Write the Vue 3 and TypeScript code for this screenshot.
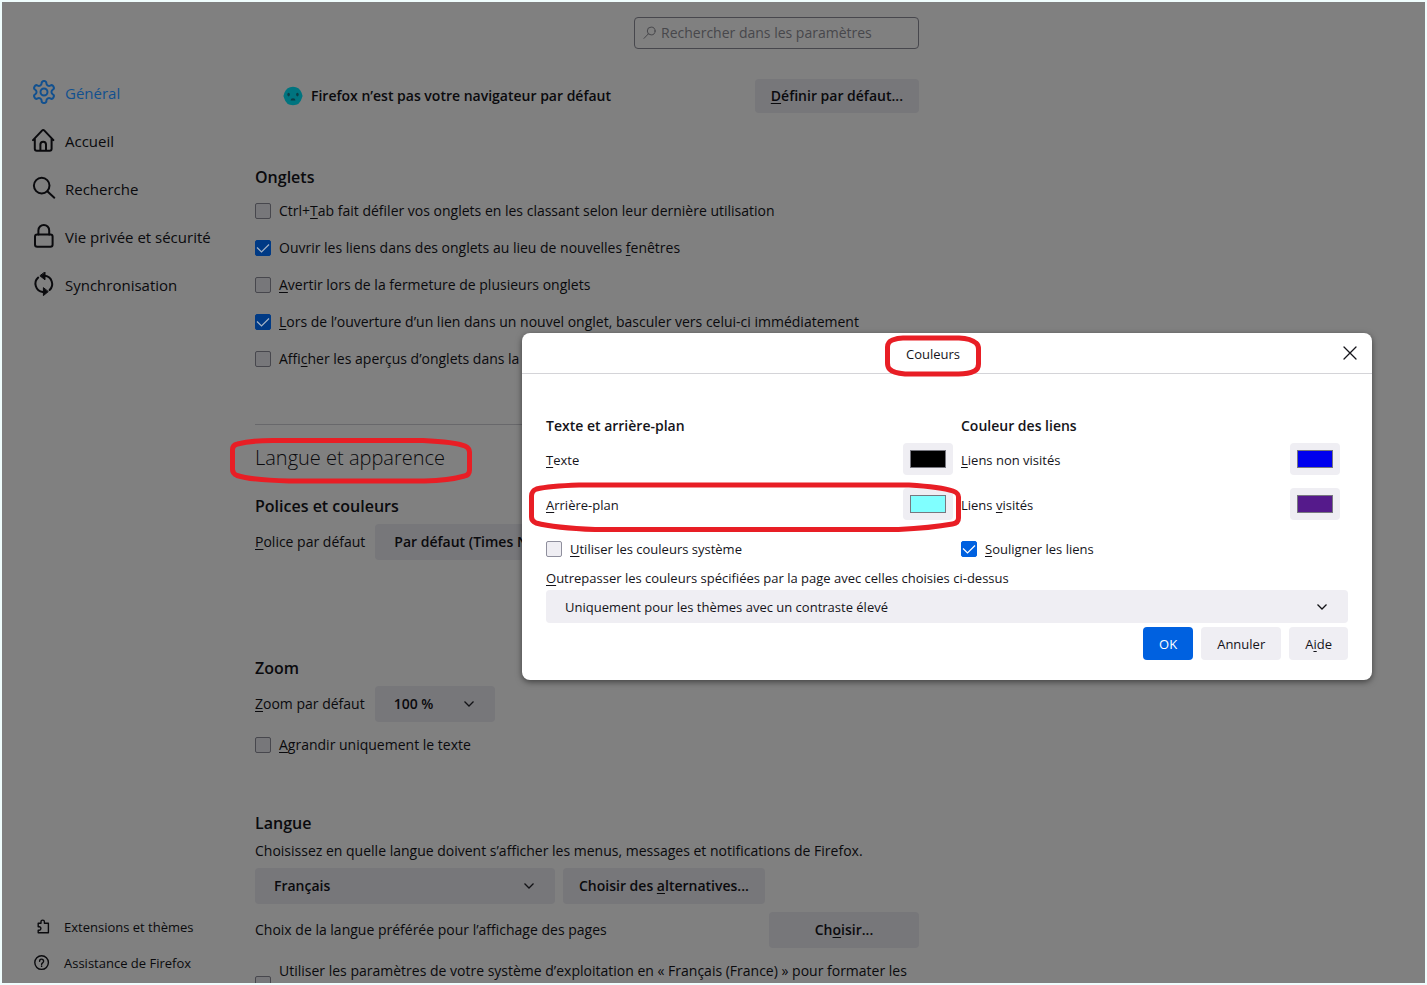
<script setup lang="ts">
import { ref } from 'vue'

interface Label { before?: string; key?: string; after: string }
interface CheckItem extends Label { id: string; checked: boolean }
interface ColorItem extends Label { id: string; value: string; marked?: boolean }

const tabs = ref<CheckItem[]>([
  { id: 'ctrl-tab', before: 'Ctrl+', key: 'T', after: 'ab fait défiler vos onglets en les classant selon leur dernière utilisation', checked: false },
  { id: 'open-tabs', before: 'Ouvrir les liens dans des onglets au lieu de nouvelles ', key: 'f', after: 'enêtres', checked: true },
  { id: 'warn-close', key: 'A', after: 'vertir lors de la fermeture de plusieurs onglets', checked: false },
  { id: 'switch-tab', key: 'L', after: 'ors de l’ouverture d’un lien dans un nouvel onglet, basculer vers celui-ci immédiatement', checked: true },
  { id: 'previews', before: 'Affi', key: 'c', after: 'her les aperçus d’onglets dans la barre des tâches', checked: false },
])

const textColors = ref<ColorItem[]>([
  { id: 'c-text', key: 'T', after: 'exte', value: '#000000' },
  { id: 'c-back', key: 'A', after: 'rrière-plan', value: '#80ffff', marked: true },
])
const linkColors = ref<ColorItem[]>([
  { id: 'c-link', key: 'L', after: 'iens non visités', value: '#0000ee' },
  { id: 'c-visited', before: 'Liens ', key: 'v', after: 'isités', value: '#551a8b' },
])

const systemColors = ref(false)
const underline = ref(true)
const textOnly = ref(false)
const osFormats = ref(false)
const open = ref(true)
</script>

<template>
  <div class="frame">
    <div class="screen">
      <aside class="sidebar">
        <nav class="nav">
          <a class="nav-item active" href="#general">
            <svg viewBox="1 1 22 22"><path d="M12.22 2h-.44a2 2 0 0 0-2 2v.18a2 2 0 0 1-1 1.73l-.43.25a2 2 0 0 1-2 0l-.15-.08a2 2 0 0 0-2.73.73l-.22.38a2 2 0 0 0 .73 2.73l.15.1a2 2 0 0 1 1 1.72v.51a2 2 0 0 1-1 1.74l-.15.09a2 2 0 0 0-.73 2.73l.22.38a2 2 0 0 0 2.73.73l.15-.08a2 2 0 0 1 2 0l.43.25a2 2 0 0 1 1 1.73V20a2 2 0 0 0 2 2h.44a2 2 0 0 0 2-2v-.18a2 2 0 0 1 1-1.73l.43-.25a2 2 0 0 1 2 0l.15.08a2 2 0 0 0 2.73-.73l.22-.39a2 2 0 0 0-.73-2.73l-.15-.08a2 2 0 0 1-1-1.74v-.5a2 2 0 0 1 1-1.74l.15-.09a2 2 0 0 0 .73-2.73l-.22-.38a2 2 0 0 0-2.73-.73l-.15.08a2 2 0 0 1-2 0l-.43-.25a2 2 0 0 1-1-1.73V4a2 2 0 0 0-2-2z" /><circle cx="12" cy="12" r="3.2" /></svg>
            <span>Général</span>
          </a>
          <a class="nav-item" href="#home">
            <svg viewBox="0 0 24 24"><path d="M1 12.1 10 2.6q1.2-1.2 2.4 0l9 9.5M2.8 10.500v10.300a2 2 0 0 0 2 2h12.800a2 2 0 0 0 2-2V10.500M8.400 22.500v-6a2.800 2.800 0 0 1 5.600 0v6" /></svg>
            <span>Accueil</span>
          </a>
          <a class="nav-item" href="#search">
            <svg viewBox="0 0 24 24"><circle cx="9.7" cy="9.6" r="7.8" /><path d="m15.300 15.300 7 6.400" /></svg>
            <span>Recherche</span>
          </a>
          <a class="nav-item" href="#privacy">
            <svg viewBox="0 0 24 24"><rect x="3" y="10.4" width="17.6" height="12.4" rx="2.2" /><path d="M6.400 10.400V6.400a5.400 5.400 0 0 1 10.800 0v4" /></svg>
            <span>Vie privée et sécurité</span>
          </a>
          <a class="nav-item" href="#sync">
            <svg viewBox="0 0 24 24"><path d="M6.2 5.6A8.3 8.3 0 0 0 10.8 20M17.6 18A8.3 8.3 0 0 0 13 3.8" /><path class="solid" d="M13 .2v7.6L8.2 4zM11.4 16v7.6l4.6-3.8z" /></svg>
            <span>Synchronisation</span>
          </a>
        </nav>
        <nav class="nav-foot">
          <a class="foot-item" href="#addons">
            <svg viewBox="0 0 16 16"><path d="M4.200 6.800V4.200h2.800V2.800a1.700 1.700 0 0 1 3.400 0v1.400h4v9.600H4.200v-2.600h1a1.500 1.500 0 0 0 0-3.400h-1z" /></svg>
            <span>Extensions et thèmes</span>
          </a>
          <a class="foot-item" href="#help">
            <svg viewBox="0 0 16 16"><circle cx="7.6" cy="7.6" r="6.8" /><path d="M5.6 6.2a2 2 0 1 1 3.2 1.5c-.8.6-1.2.8-1.2 1.700" /><path d="M7.6 11v.4" /></svg>
            <span>Assistance de Firefox</span>
          </a>
        </nav>
      </aside>

      <main class="main">
        <div class="search">
          <svg viewBox="0 0 14 14"><circle cx="8.2" cy="5" r="3.9" /><path d="M5.4 7.8 1 12.4" /></svg>
          <input type="search" aria-label="Rechercher dans les paramètres" placeholder="Rechercher dans les paramètres">
        </div>

        <div class="default-row">
          <svg class="face" viewBox="0 0 20 20"><path class="skin" d="M10 .8a9.2 9.2 0 0 1 8.6 6L19.6 10l-.9 2.4A9.2 9.2 0 0 1 10 19.2a9.2 9.2 0 0 1-8.7-6.8L.4 10l1-3.2A9.2 9.2 0 0 1 10 .8z" /><ellipse cx="5.6" cy="8.6" rx="1.3" ry="1.8" /><ellipse cx="14.4" cy="8.6" rx="1.3" ry="1.8" /><path d="M7.6 14.6a2.4 2.4 0 0 1 4.8 0z" /></svg>
          <strong>Firefox n’est pas votre navigateur par défaut</strong>
          <button type="button" class="btn"><u>D</u>éfinir par défaut...</button>
        </div>

        <section class="group tabs">
          <h2>Onglets</h2>
          <label v-for="t in tabs" :key="t.id" class="check" :for="t.id">
            <input :id="t.id" v-model="t.checked" type="checkbox">
            <span>{{ t.before }}<u>{{ t.key }}</u>{{ t.after }}</span>
          </label>
        </section>

        <div class="title">
          <h1>Langue et apparence</h1>
          <svg class="mark mark-title" viewBox="0 0 244 46"><path d="M44 2.500H194Q226 4 236 8q4.500 2 4.500 6v18q0 5-5 6-16 4.500-40 5H60Q22 42 8 37.500q-4.500-2-4.500-6V12q0-5 5-6Q22 2.500 44 2.500z" /></svg>
        </div>

        <section class="group fonts">
          <h2>Polices et couleurs</h2>
          <div class="field">
            <label for="font"><u>P</u>olice par défaut</label>
            <select id="font" class="select font-select"><option>Par défaut (Times New Roman)</option></select>
          </div>
        </section>

        <section class="group zoom">
          <h2>Zoom</h2>
          <div class="field">
            <label for="zoom"><u>Z</u>oom par défaut</label>
            <select id="zoom" class="select zoom-select"><option>100 %</option></select>
          </div>
          <label class="check" for="text-only">
            <input id="text-only" v-model="textOnly" type="checkbox">
            <span><u>A</u>grandir uniquement le texte</span>
          </label>
        </section>

        <section class="group language">
          <h2>Langue</h2>
          <label class="desc" for="lang">Choisissez en quelle langue doivent s’afficher les menus, messages et notifications de Firefox.</label>
          <div class="field">
            <select id="lang" class="select lang-select"><option>Français</option></select>
            <button type="button" class="btn tall">Choisir des <u>a</u>lternatives...</button>
          </div>
          <div class="field spread">
            <span>Choix de la langue préférée pour l’affichage des pages</span>
            <button type="button" class="btn tall wide">Ch<u>o</u>isir...</button>
          </div>
          <label class="check multi" for="os-format">
            <input id="os-format" v-model="osFormats" type="checkbox">
            <span>Utiliser les paramètres de votre système d’exploitation en « Français (France) » pour formater les</span>
          </label>
        </section>
      </main>

      <div v-if="open" class="overlay">
        <div class="dialog" role="dialog" aria-labelledby="dlg-title">
          <header class="dlg-head">
            <div class="dlg-title">
              <span id="dlg-title">Couleurs</span>
              <svg class="mark mark-dialog" viewBox="0 0 96 42"><path d="M18 3H74Q86 3.500 91 8q2.500 2 2.500 6v15q0 5-4 7-6 3-16 3H20Q8 38 4.500 34q-2-2-2-6V12q0-5 5-7 5-2 10.500-2z" /></svg>
            </div>
            <button type="button" class="close" aria-label="Fermer" @click="open = false">
              <svg viewBox="0 0 14 14"><path d="m1 1 12 12M13 1 1 13" /></svg>
            </button>
          </header>
          <div class="dlg-body">
            <div class="columns">
              <section class="column">
                <h3>Texte et arrière-plan</h3>
                <div v-for="c in textColors" :key="c.id" class="color-row">
                  <label :for="c.id">{{ c.before }}<u>{{ c.key }}</u>{{ c.after }}</label>
                  <input :id="c.id" v-model="c.value" type="color">
                  <svg v-if="c.marked" class="mark mark-row" viewBox="0 0 432 50"><path d="M50 3H380Q412 5 424 9q5.500 2 5.500 6V36q0 5-6 6-22 4-54 5.500H66Q26 46 7 41q-4.500-2-4.500-6V14q0-5 5-7Q20 4 50 3z" /></svg>
                </div>
                <label class="check small" for="system">
                  <input id="system" v-model="systemColors" type="checkbox">
                  <span><u>U</u>tiliser les couleurs système</span>
                </label>
              </section>
              <section class="column">
                <h3>Couleur des liens</h3>
                <div v-for="c in linkColors" :key="c.id" class="color-row">
                  <label :for="c.id">{{ c.before }}<u>{{ c.key }}</u>{{ c.after }}</label>
                  <input :id="c.id" v-model="c.value" type="color">
                </div>
                <label class="check small" for="underline">
                  <input id="underline" v-model="underline" type="checkbox">
                  <span><u>S</u>ouligner les liens</span>
                </label>
              </section>
            </div>
            <label class="override" for="override"><u>O</u>utrepasser les couleurs spécifiées par la page avec celles choisies ci-dessus</label>
            <select id="override" class="select override-select"><option>Uniquement pour les thèmes avec un contraste élevé</option></select>
            <div class="actions">
              <button type="button" class="btn primary">OK</button>
              <button type="button" class="btn">Annuler</button>
              <button type="button" class="btn">A<u>i</u>de</button>
            </div>
          </div>
        </div>
      </div>
    </div>
  </div>
</template>

<style>
body { margin: 0; }
</style>

<style scoped>
* { box-sizing: border-box; }
.frame {
  height: 100vh;
  padding: 2px;
  background: #effdfd;
  color: #0a0a0d;
  font: 14px/20px "Open Sans", "Noto Sans", sans-serif;
}
.screen {
  position: relative;
  display: flex;
  height: 100%;
  overflow: hidden;
  background: #808080;
}
h1, h2, h3 { margin: 0; }
u { text-decoration: underline; text-underline-offset: 2px; }
button, input, select { margin: 0; font: inherit; color: inherit; }
svg { flex: none; fill: none; stroke: currentColor; stroke-linecap: round; stroke-linejoin: round; }

.sidebar {
  display: flex;
  flex-direction: column;
  justify-content: space-between;
  flex: none;
  width: 253px;
  padding: 66px 0 2px 30px;
}
.nav, .nav-foot { display: flex; flex-direction: column; }
.nav-item, .foot-item { display: flex; align-items: center; color: inherit; text-decoration: none; }
.nav-item { gap: 9px; height: 48px; font-size: 15px; }
.nav-item span { padding-top: 2px; }
.nav-item svg { width: 24px; height: 24px; stroke-width: 2; }
.nav-item .solid { fill: currentColor; stroke-width: 1; }
.nav-item.active { color: #11508f; }
.nav-item.active svg { stroke-width: 1.8; }
.foot-item { gap: 14px; height: 36px; padding-left: 2px; font-size: 13px; }
.foot-item svg { width: 16px; height: 16px; stroke-width: 1.4; }

.main { display: flex; flex-direction: column; width: 664px; }
.main > * { flex: none; }
.search {
  display: flex;
  align-items: center;
  align-self: flex-end;
  gap: 4px;
  width: 285px;
  height: 32px;
  margin-top: 15px;
  padding: 0 8px;
  border: 1px solid #47474d;
  border-radius: 4px;
  color: #47474b;
}
.search svg { width: 14px; height: 14px; }
.search input { flex: 1; min-width: 0; padding: 0; border: 0; outline: 0; background: none; }
.search input::placeholder { color: #47474b; opacity: 1; }

.btn {
  height: 33px;
  padding: 0 16px;
  border: 0;
  border-radius: 4px;
  background: #77777a;
  font-weight: 600;
}
.default-row { display: flex; align-items: center; height: 34px; margin-top: 30px; padding-left: 28px; }
.default-row strong { flex: 1; padding-left: 8px; font-weight: 600; }
.default-row .btn { height: 34px; }
.face { width: 20px; height: 20px; stroke: none; fill: #0b3d46; }
.face .skin { fill: #00747f; }

.group { display: flex; flex-direction: column; }
.group h2 { font-size: 16px; line-height: 24px; font-weight: 600; }
.tabs { margin-top: 52px; padding-bottom: 47px; border-bottom: 1px solid #68686b; }
.check { display: flex; align-items: center; gap: 8px; height: 37px; }
.group.tabs h2 { margin-bottom: 3px; }
.check input {
  flex: none;
  appearance: none;
  width: 16px;
  height: 16px;
  border: 1px solid #47474d;
  border-radius: 2px;
  background: #77777a;
}
.check input:checked {
  border-color: #003a85;
  background: #003a85 url("data:image/svg+xml,%3Csvg xmlns='http://www.w3.org/2000/svg' viewBox='0 0 14 14'%3E%3Cpath d='M1 6.500l4.500 4.500L13 3.500' fill='none' stroke='%23a3b3c6' stroke-width='1.200'/%3E%3C/svg%3E") center / 14px 14px;
}

.title { position: relative; display: flex; align-items: center; height: 40px; margin-top: 13px; }
h1 { font-size: 20px; line-height: 28px; font-weight: 300; }
.mark { position: absolute; stroke: #e81e25; stroke-width: 5; pointer-events: none; }
.mark-title { left: -26px; top: 0; width: 244px; height: 46px; }

.fonts { margin-top: 16px; }
.field { display: flex; align-items: center; gap: 8px; }
.field label { padding-right: 2px; }
.select {
  appearance: none;
  height: 36px;
  padding: 0 40px 0 19px;
  border: 0;
  border-radius: 4px;
  background: #77777a url("data:image/svg+xml,%3Csvg xmlns='http://www.w3.org/2000/svg' viewBox='0 0 12 12'%3E%3Cpath d='M1.500 3.500L6 8 10.500 3.500' fill='none' stroke='%23121216' stroke-width='1.300'/%3E%3C/svg%3E") no-repeat right 20px center / 12px 12px;
  font-weight: 600;
}
.font-select { width: 300px; }
.fonts .field { margin-top: 6px; }
.zoom { margin-top: 96px; }
.zoom .field { margin-top: 6px; }
.zoom .check { margin-top: 4px; }
.zoom-select { width: 120px; }
.language { margin-top: 48px; }
.desc { display: block; margin: 6px 0 7px; }
.lang-select { width: 300px; }
.tall { height: 36px; }
.wide { width: 150px; }
.spread { justify-content: space-between; margin-top: 8px; }
.multi { height: 40px; margin-top: 13px; }
.multi input { margin-top: 6px; }
.multi span { align-self: flex-start; }

.overlay { position: absolute; inset: 0; display: flex; justify-content: flex-end; align-items: flex-start; padding: 331px 53px 0 0; }
.dialog {
  width: 850px;
  border-radius: 8px;
  background: #fff;
  color: #15141a;
  font-size: 13px;
  line-height: 18px;
  box-shadow: 0 2px 6px rgba(0, 0, 0, 0.5);
}
.dlg-head { display: flex; align-items: center; height: 41px; padding: 0 14px 0 2px; border-bottom: 1px solid #d4d4d8; }
.dlg-title { position: relative; flex: 1; padding-top: 2px; text-align: center; font-weight: 500; }
.mark-dialog { left: 50%; top: -8px; width: 96px; height: 42px; margin-left: -48px; }
.close { display: flex; padding: 1px; border: 0; background: none; }
.close svg { width: 14px; height: 14px; stroke-width: 1.3; }
.dlg-body { display: flex; flex-direction: column; padding: 40px 24px 20px; }
.columns { display: grid; grid-template-columns: 415fr 387fr; }
.column { padding-right: 8px; }
.column h3 { margin-bottom: 5px; font-size: 14px; line-height: 24px; font-weight: 600; }
.color-row { position: relative; display: flex; align-items: center; justify-content: space-between; height: 32px; margin-bottom: 13px; }
.color-row label { padding-top: 2px; }
.mark-row { left: -17px; top: -6px; width: 432px; height: 50px; }
.color-row input { appearance: none; width: 50px; height: 32px; padding: 0; border: 0; border-radius: 4px; background: #efeef3; }
.color-row input::-webkit-color-swatch-wrapper { padding: 7px; }
.color-row input::-webkit-color-swatch { border: 1px solid #77777f; border-radius: 0; }
.small { height: 32px; }
.small input { border-color: #8f8f9d; background-color: #efeef3; }
.small input:checked {
  border-color: #0061e0;
  background: #0061e0 url("data:image/svg+xml,%3Csvg xmlns='http://www.w3.org/2000/svg' viewBox='0 0 14 14'%3E%3Cpath d='M1 6.500l4.500 4.500L13 3.500' fill='none' stroke='%23fff' stroke-width='1.200'/%3E%3C/svg%3E") center / 14px 14px;
}
.override { padding-top: 1px; line-height: 24px; }
.dialog .select { width: 100%; height: 33px; background-color: #efeef3; font-weight: 500; }
.actions { display: flex; justify-content: flex-end; gap: 8px; margin-top: 4px; }
.actions .btn { background: #efeef3; font-weight: 500; }
.actions .primary { background: #0061e0; color: #fff; }
</style>
